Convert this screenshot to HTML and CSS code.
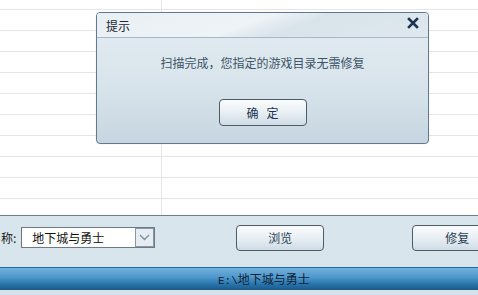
FILE: index.html
```html
<!DOCTYPE html>
<html lang="zh-CN">
<head>
    <meta charset="UTF-8">
    <title>修复工具</title>
    <link rel="stylesheet" href="styles.css">
</head>
<body>
    <div class="window">
        <div class="grid">
            <div class="row first"><div class="cell name"></div><div class="cell"></div></div>
            <div class="row"><div class="cell name"></div><div class="cell"></div></div>
            <div class="row"><div class="cell name"></div><div class="cell"></div></div>
            <div class="row"><div class="cell name"></div><div class="cell"></div></div>
            <div class="row"><div class="cell name"></div><div class="cell"></div></div>
            <div class="row"><div class="cell name"></div><div class="cell"></div></div>
            <div class="row"><div class="cell name"></div><div class="cell"></div></div>
            <div class="row"><div class="cell name"></div><div class="cell"></div></div>
            <div class="row"><div class="cell name"></div><div class="cell"></div></div>
            <div class="row"><div class="cell name"></div><div class="cell"></div></div>
            <div class="row last"><div class="cell name"></div><div class="cell"></div></div>
        </div>

        <div class="panel">
            <span class="label">游戏名称:</span>
            <div class="select">
                <span class="select-text">地下城与勇士</span>
                <span class="select-btn">
                    <svg width="11" height="7" viewBox="0 0 11 7"><path d="M1 1 L5.5 5.5 L10 1" fill="none" stroke="#7d8c98" stroke-width="1.3"/></svg>
                </span>
            </div>
            <button class="btn browse">浏览</button>
            <button class="btn repair">修复</button>
        </div>

        <div class="status"><span class="path">E:\</span>地下城与勇士</div>
        <div class="strip"></div>
    </div>

    <div class="dialog">
        <div class="dialog-title">
            <span>提示</span>
            <svg class="close" width="12" height="12" viewBox="0 0 12 12"><path d="M2 2 L10 10 M10 2 L2 10" stroke="#1b3552" stroke-width="2.6" stroke-linecap="square"/></svg>
        </div>
        <div class="dialog-body">
            <p class="message">扫描完成，您指定的游戏目录无需修复</p>
            <button class="btn ok">确&nbsp;&nbsp;&nbsp;定</button>
        </div>
    </div>
</body>
</html>
```

FILE: styles.css
```css
body {
    margin: 0;
    width: 478px;
    height: 295px;
    overflow: hidden;
    font-family: "Noto Sans CJK SC", "Liberation Sans", sans-serif;
    font-size: 12px;
    background: #ffffff;
}

.window {
    display: flex;
    flex-direction: column;
    height: 295px;
}

/* list area */
.grid {
    height: 215px;
    overflow: hidden;
    background: #ffffff;
}

.row {
    display: flex;
    height: 20px;
    border-bottom: 1px solid #e3e6e8;
}

.row.first {
    height: 9px;
}

.row.last {
    border-bottom: none;
}

.cell {
    flex: 1;
}

.cell.name {
    flex: 0 0 161px;
    border-right: 1px solid #e3e6e8;
}

/* bottom panel */
.panel {
    display: flex;
    align-items: center;
    height: 25px;
    padding: 9px 0 17px 0;
    border-top: 1px solid #6f7f8b;
    background: #d8e5ed;
    overflow: hidden;
    white-space: nowrap;
}

.label {
    flex-shrink: 0;
    margin-left: -35px;
    color: #1a1a1a;
}

.select {
    display: flex;
    flex-shrink: 0;
    align-items: center;
    justify-content: space-between;
    box-sizing: border-box;
    width: 134px;
    height: 21px;
    margin-left: 5px;
    border: 1px solid #6d7b86;
    background: #ffffff;
}

.select-text {
    padding-left: 10px;
    color: #111;
    font-size: 12px;
}

.select-btn {
    display: flex;
    align-items: center;
    justify-content: center;
    box-sizing: border-box;
    width: 19px;
    height: 19px;
    border: 1px solid #8a98a3;
    background: #e6edf2;
}

.btn {
    box-sizing: border-box;
    flex-shrink: 0;
    height: 26px;
    padding: 0;
    border: 1px solid #4d5b66;
    border-radius: 4px;
    background: linear-gradient(#fbfcfd, #e6edf2 55%, #cfdce6);
    color: #2a3f55;
    font-family: "Noto Sans CJK SC", sans-serif;
    font-size: 12px;
}

.browse {
    width: 88px;
    margin-left: 81px;
}

.repair {
    width: 88px;
    margin-left: 88px;
    text-align: left;
    padding-left: 32px;
}

/* status bar */
.status {
    box-sizing: border-box;
    height: 23px;
    line-height: 21px;
    padding-left: 218px;
    border-top: 1px solid #2d6a95;
    border-bottom: 1px solid #1d5b85;
    background: linear-gradient(#6fb0dd, #4e97cb 45%, #2a76ae 75%, #1c5f90);
    color: #0e2233;
    font-size: 12px;
    white-space: nowrap;
}

.path {
    font-family: "Liberation Mono", monospace;
    font-size: 11px;
}

.strip {
    flex: 1;
    background: #d5e2ea;
}

/* message box */
.dialog {
    position: absolute;
    left: 96px;
    top: 12px;
    box-sizing: border-box;
    width: 333px;
    height: 132px;
    border: 1px solid #65778a;
    border-radius: 4px;
    background: linear-gradient(#e4ecf1, #d7e3eb 60%, #c6d5e0);
    box-shadow: 0 0 1px rgba(0, 0, 0, 0.2);
    overflow: hidden;
}

.dialog-title {
    display: flex;
    align-items: center;
    justify-content: space-between;
    height: 24px;
    padding: 0 9px 0 9px;
    border-bottom: 1px solid #a7b9c7;
    background: linear-gradient(160deg, #e8eff4 0%, #eef3f6 45%, #d8e3ea 60%, #dfe8ee 100%);
    color: #1b2733;
    font-size: 12px;
}

.close {
    margin-top: -4px;
}

.dialog-body {
    display: flex;
    flex-direction: column;
    align-items: center;
}

.message {
    margin: 15px 0 0 0;
    color: #3d5467;
    font-size: 12px;
    line-height: 20px;
}

.ok {
    width: 88px;
    height: 27px;
    margin-top: 26px;
    color: #1b3550;
}
```
